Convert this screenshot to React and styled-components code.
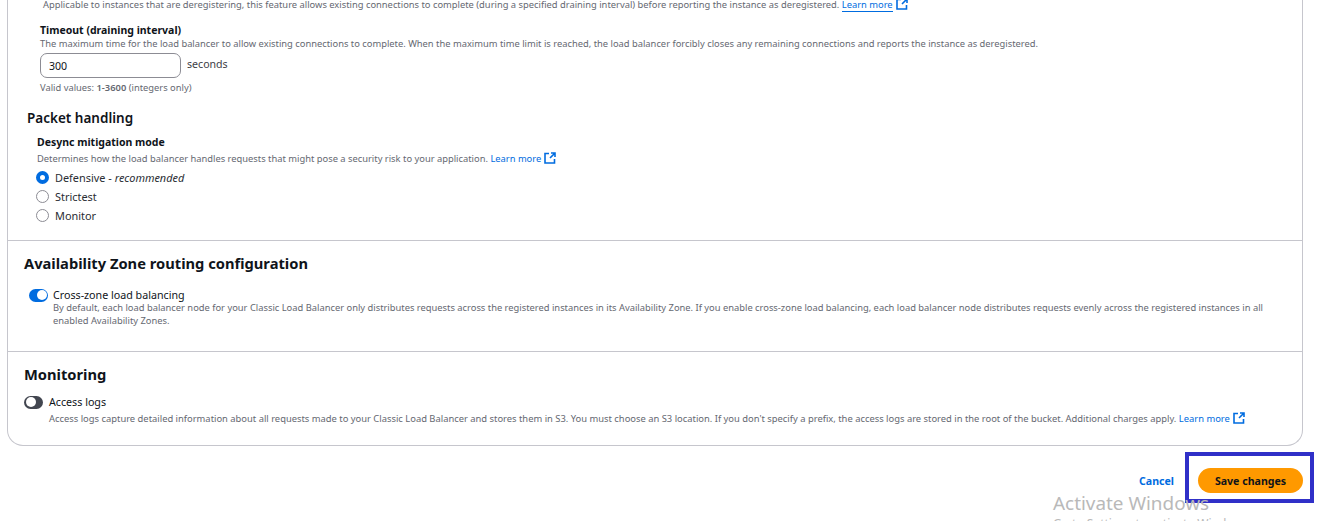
import React from "react";
import styled, { createGlobalStyle } from "styled-components";

const Global = createGlobalStyle`
  html, body { margin: 0; padding: 0; background: #fff; height: 521px; overflow: hidden; }
  body { font-family: "Noto Sans", "Open Sans", sans-serif; color: #0f141a; }
`;
const Page = styled.div`
  position: relative;
  width: 1324px;
  height: 521px;
  overflow: hidden;
  padding: 0 21px 0 7px;
  box-sizing: border-box;
`;
const Panel = styled.div`
  border: 1px solid #c6c6cd;
  border-top: 0;
  border-radius: 0 0 16px 16px;
  height: 446px;
  box-sizing: border-box;
  display: flex;
  flex-direction: column;
`;
const Section = styled.section`
  height: ${(p) => p.$h}px;
  flex: none;
  box-sizing: border-box;
  padding: ${(p) => p.$pad};
  border-bottom: ${(p) => (p.$last ? "0" : "1px solid #c6c6cd")};
`;
const Desc = styled.div`
  font-size: ${(p) => p.$size || 9.35}px;
  line-height: 12px;
  color: #656871;
  white-space: nowrap;
  padding-left: ${(p) => p.$left || 0}px;
  margin-top: ${(p) => p.$top || 0}px;
`;
const Wrapped = styled(Desc)`
  white-space: normal;
  line-height: 13px;
  width: 1215px;
`;
const Link = styled.a`
  color: #006ce0;
  border-bottom: ${(p) => (p.$under ? "1px solid #006ce0" : "0")};
`;
const Ext = styled.svg`
  width: 12px;
  height: 12px;
  margin-left: 3px;
  vertical-align: -2.5px;
`;
const FieldLabel = styled.div`
  font-size: 10.5px;
  line-height: 14px;
  font-weight: 700;
  color: #0f141a;
  margin-left: ${(p) => p.$left}px;
  margin-top: ${(p) => p.$top}px;
`;
const InputRow = styled.div`
  display: flex;
  align-items: flex-start;
  gap: 6px;
  margin: 3px 0 0 32px;
`;
const Input = styled.div`
  width: 141px;
  height: 25px;
  box-sizing: border-box;
  border: 1px solid #8c8c94;
  border-radius: 7px;
  font-size: 10.6px;
  line-height: 25px;
  padding-left: 8px;
  color: #0f141a;
`;
const Unit = styled.span`
  font-size: 10.6px;
  line-height: 22px;
  color: #3d4046;
`;
const SubHead = styled.h3`
  margin: 16px 0 0 19px;
  font-size: 13.5px;
  line-height: 17px;
  font-weight: 600;
`;
const RadioRow = styled.div`
  display: flex;
  align-items: center;
  gap: 6px;
  height: 19px;
  margin-left: 28px;
  font-size: 10.9px;
  color: #2a2d33;
`;
const Radio = styled.span`
  width: 13px;
  height: 13px;
  box-sizing: border-box;
  border-radius: 50%;
  border: ${(p) => (p.$on ? "4px solid #006ce0" : "1.5px solid #8c8c94")};
  background: #fff;
`;
const RadioGroup = styled.div`
  margin-top: 4px;
`;
const Recommended = styled.i`
  margin-left: -3px;
`;
const SectionTitle = styled.h2`
  margin: 0;
  font-size: 14.7px;
  line-height: 20px;
  font-weight: 700;
  color: #0f141a;
`;
const ToggleRow = styled.div`
  display: flex;
  align-items: center;
  gap: ${(p) => p.$gap}px;
  margin: ${(p) => p.$margin};
  font-size: 10.7px;
  line-height: 14px;
  color: #0f141a;
`;
const Toggle = styled.span`
  width: 19px;
  height: 13px;
  box-sizing: border-box;
  border-radius: 7px;
  background: ${(p) => (p.$on ? "#006ce0" : "#424650")};
  display: flex;
  justify-content: ${(p) => (p.$on ? "flex-end" : "flex-start")};
  align-items: center;
  padding: 0 1.5px;
  &::after {
    content: "";
    width: 10px;
    height: 10px;
    border-radius: 50%;
    background: #fff;
  }
`;
const Footer = styled.div`
  display: flex;
  justify-content: flex-end;
  align-items: center;
  gap: 24px;
  margin-top: 22px;
`;
const Cancel = styled.a`
  font-size: 10.6px;
  font-weight: 700;
  color: #006ce0;
`;
const Save = styled.button`
  width: 105px;
  height: 25px;
  border: 0;
  border-radius: 13px;
  background: #ff9900;
  font: 700 10.6px "Noto Sans", sans-serif;
  color: #0f141a;
  padding: 0;
`;
const Highlight = styled.div`
  position: absolute;
  left: 1185px;
  top: 452px;
  width: 129px;
  height: 51px;
  box-sizing: border-box;
  border: 4px solid #3030c8;
`;
const Watermark = styled.div`
  position: absolute;
  left: 1053px;
  top: 491px;
  color: #b9b9b9;
  font-size: 18.9px;
  line-height: 24px;
  white-space: nowrap;
`;
const WatermarkSub = styled.div`
  font-size: 12px;
  line-height: 18px;
`;
const Strong = styled.b`
  font-weight: 600;
`;
const TopNote = styled(Desc)`
  margin-top: -2px;
`;
const ZoneDesc = styled(Wrapped)`
  margin-top: -1px;
`;

const ExtIcon = () => (
  <Ext viewBox="0 0 12 12" fill="none" stroke="#006ce0">
    <path d="M5 1.5H1v9.5h9.5V7" strokeWidth="1.6" />
    <path d="M7 1h4v4M11 1 6 6" strokeWidth="1.6" />
  </Ext>
);

export default function App() {
  return (
    <Page>
      <Global />
      <Panel>
        <Section $h={241} $pad="0">
          <TopNote $left={35}>
            Applicable to instances that are deregistering, this feature allows existing connections to complete (during a specified draining interval) before reporting the instance as deregistered.{" "}
            <Link $under>Learn more</Link>
            <ExtIcon />
          </TopNote>
          <FieldLabel $left={32} $top={12}>Timeout (draining interval)</FieldLabel>
          <Desc $left={32} $top={1}>
            The maximum time for the load balancer to allow existing connections to complete. When the maximum time limit is reached, the load balancer forcibly closes any remaining connections and reports the instance as deregistered.
          </Desc>
          <InputRow>
            <Input>300</Input>
            <Unit>seconds</Unit>
          </InputRow>
          <Desc $left={32} $top={4}>
            Valid values: <Strong>1-3600</Strong> (integers only)
          </Desc>
          <SubHead>Packet handling</SubHead>
          <FieldLabel $left={29} $top={8}>Desync mitigation mode</FieldLabel>
          <Desc $left={29} $top={3}>
            Determines how the load balancer handles requests that might pose a security risk to your application.{" "}
            <Link>Learn more</Link>
            <ExtIcon />
          </Desc>
          <RadioGroup>
            <RadioRow><Radio $on />Defensive - <Recommended>recommended</Recommended></RadioRow>
            <RadioRow><Radio />Strictest</RadioRow>
            <RadioRow><Radio />Monitor</RadioRow>
          </RadioGroup>
        </Section>
        <Section $h={111} $pad="12px 0 0 16px">
          <SectionTitle>Availability Zone routing configuration</SectionTitle>
          <ToggleRow $gap={5} $margin="15px 0 0 5px">
            <Toggle $on />
            Cross-zone load balancing
          </ToggleRow>
          <ZoneDesc $left={29}>
            By default, each load balancer node for your Classic Load Balancer only distributes requests across the registered instances in its Availability Zone. If you enable cross-zone load balancing, each load balancer node distributes requests evenly across the registered instances in all enabled Availability Zones.
          </ZoneDesc>
        </Section>
        <Section $h={93} $last $pad="12px 0 0 16px">
          <SectionTitle>Monitoring</SectionTitle>
          <ToggleRow $gap={6} $margin="11px 0 0 0">
            <Toggle />
            Access logs
          </ToggleRow>
          <Desc $left={25} $top={3} $size={9.39}>
            Access logs capture detailed information about all requests made to your Classic Load Balancer and stores them in S3. You must choose an S3 location. If you don't specify a prefix, the access logs are stored in the root of the bucket. Additional charges apply.{" "}
            <Link>Learn more</Link>
            <ExtIcon />
          </Desc>
        </Section>
      </Panel>
      <Footer>
        <Cancel>Cancel</Cancel>
        <Save>Save changes</Save>
      </Footer>
      <Highlight />
      <Watermark>
        Activate Windows
        <WatermarkSub>Go to Settings to activate Windows.</WatermarkSub>
      </Watermark>
    </Page>
  );
}
